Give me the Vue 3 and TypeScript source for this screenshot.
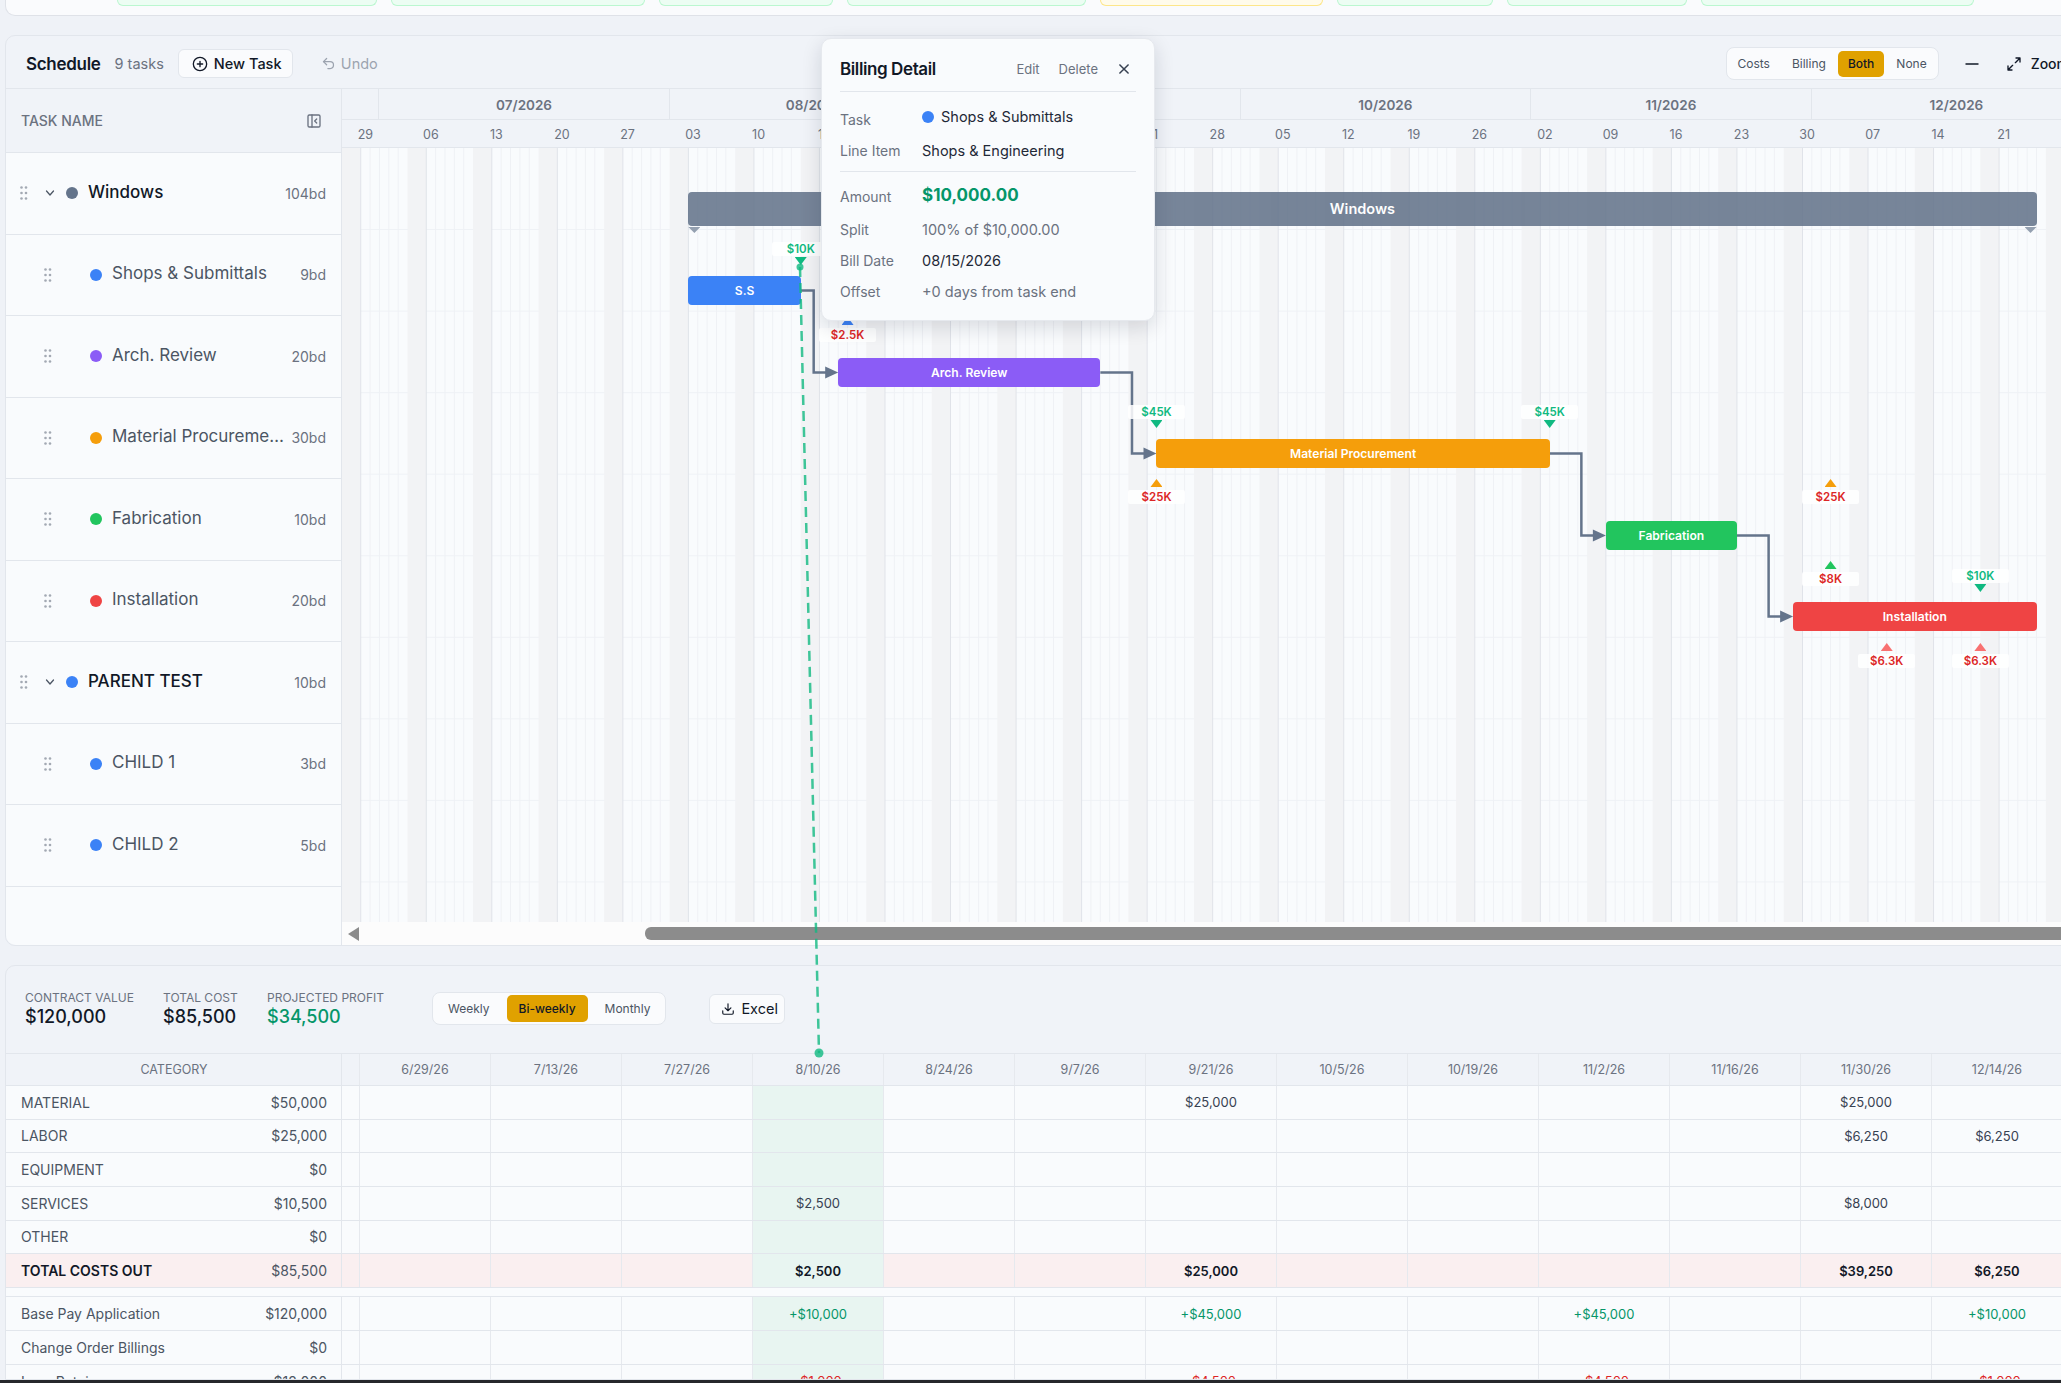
<script setup lang="ts">
const DAY = 9.362;
const ROW = 81.55;

const pills = [
  { w: 260, warn: false },
  { w: 254, warn: false },
  { w: 174, warn: false },
  { w: 239, warn: false },
  { w: 223, warn: true },
  { w: 156, warn: false },
  { w: 180, warn: false },
  { w: 273, warn: false },
];

const tasks = [
  { name: "Windows", dur: "104bd", color: "#64748b", parent: true },
  { name: "Shops & Submittals", dur: "9bd", color: "#3b82f6", parent: false },
  { name: "Arch. Review", dur: "20bd", color: "#8b5cf6", parent: false },
  { name: "Material Procurement", dur: "30bd", color: "#f59e0b", parent: false },
  { name: "Fabrication", dur: "10bd", color: "#22c55e", parent: false },
  { name: "Installation", dur: "20bd", color: "#ef4444", parent: false },
  { name: "PARENT TEST", dur: "10bd", color: "#3b82f6", parent: true },
  { name: "CHILD 1", dur: "3bd", color: "#3b82f6", parent: false },
  { name: "CHILD 2", dur: "5bd", color: "#3b82f6", parent: false },
];

const months = [
  { label: "", days: 4 },
  { label: "07/2026", days: 31 },
  { label: "08/2026", days: 31 },
  { label: "09/2026", days: 30 },
  { label: "10/2026", days: 31 },
  { label: "11/2026", days: 30 },
  { label: "12/2026", days: 31 },
];

const weeks = ["29", "06", "13", "20", "27", "03", "10", "17", "24", "31", "07", "14", "21", "28", "05", "12", "19", "26", "02", "09", "16", "23", "30", "07", "14", "21"];

// grid lines, day 0 is Sat Jun 27
const totalDays = 186;
const dayIdx = Array.from({ length: totalDays }, (_, i) => i);
const rowIdx = Array.from({ length: 9 }, (_, i) => i + 1);
const weekendDays = dayIdx.filter((d) => d % 7 === 0);
const weekdayLines = dayIdx.filter((d) => d % 7 > 2);
const mondayLines = dayIdx.filter((d) => d % 7 === 2);

const bars = [
  { label: "S.S", start: 37, end: 49, top: 128, color: "#3b82f6" },
  { label: "Arch. Review", start: 53, end: 81, top: 210, color: "#8b5cf6" },
  { label: "Material Procurement", start: 87, end: 129, top: 291, color: "#f59e0b" },
  { label: "Fabrication", start: 135, end: 149, top: 373, color: "#22c55e" },
  { label: "Installation", start: 155, end: 181, top: 454, color: "#ef4444" },
];

const links = bars.slice(1).map((b, i) => {
  const from = bars[i];
  const tx = b.start * DAY;
  const y1 = from.top + 14.5;
  const y2 = b.top + 14.5;
  return {
    line: `M${from.end * DAY} ${y1}H${tx - 24.5}V${y2}H${tx - 10}`,
    arrow: `${tx},${y2} ${tx - 13},${y2 - 6} ${tx - 13},${y2 + 6}`,
  };
});

const GREEN = "#10b981";
const RED = "#dc2626";
const markers = [
  { day: 49, top: 94, down: true, label: "$10K", tri: GREEN, text: GREEN },
  { day: 54, top: 169, down: false, label: "$2.5K", tri: "#3b82f6", text: RED },
  { day: 87, top: 257, down: true, label: "$45K", tri: GREEN, text: GREEN },
  { day: 129, top: 257, down: true, label: "$45K", tri: GREEN, text: GREEN },
  { day: 87, top: 331, down: false, label: "$25K", tri: "#f59e0b", text: RED },
  { day: 159, top: 331, down: false, label: "$25K", tri: "#f59e0b", text: RED },
  { day: 159, top: 413, down: false, label: "$8K", tri: "#22c55e", text: RED },
  { day: 175, top: 421, down: true, label: "$10K", tri: GREEN, text: GREEN },
  { day: 165, top: 495, down: false, label: "$6.3K", tri: "#f87171", text: RED },
  { day: 175, top: 495, down: false, label: "$6.3K", tri: "#f87171", text: RED },
];

const periods = ["6/29/26", "7/13/26", "7/27/26", "8/10/26", "8/24/26", "9/7/26", "9/21/26", "10/5/26", "10/19/26", "11/2/26", "11/16/26", "11/30/26", "12/14/26"];

type Row = { label: string; total: string; cells: Record<number, string>; kind?: string };

const costRows: Row[] = [
  { label: "MATERIAL", total: "$50,000", cells: { 6: "$25,000", 11: "$25,000" } },
  { label: "LABOR", total: "$25,000", cells: { 11: "$6,250", 12: "$6,250" } },
  { label: "EQUIPMENT", total: "$0", cells: {} },
  { label: "SERVICES", total: "$10,500", cells: { 3: "$2,500", 11: "$8,000" } },
  { label: "OTHER", total: "$0", cells: {} },
  { label: "TOTAL COSTS OUT", total: "$85,500", cells: { 3: "$2,500", 6: "$25,000", 11: "$39,250", 12: "$6,250" }, kind: "total" },
];

const billRows: Row[] = [
  { label: "Base Pay Application", total: "$120,000", cells: { 3: "+$10,000", 6: "+$45,000", 9: "+$45,000", 12: "+$10,000" }, kind: "plus" },
  { label: "Change Order Billings", total: "$0", cells: {}, kind: "plus" },
  { label: "Less Retainage", total: "$12,000", cells: { 3: "-$1,000", 6: "-$4,500", 9: "-$4,500", 12: "-$1,000" }, kind: "neg" },
];
</script>

<template>
  <div class="page">
    <section class="top-card">
      <span v-for="(p, i) in pills" :key="i" class="pill" :class="{ warn: p.warn }" :style="{ width: p.w + 'px' }"></span>
    </section>

    <section class="schedule">
      <header class="toolbar">
        <strong class="title">Schedule</strong>
        <span class="count">9 tasks</span>
        <button class="btn new-task">
          <svg width="16" height="16" viewBox="0 0 24 24" fill="none" stroke="currentColor" stroke-width="2" stroke-linecap="round"><circle cx="12" cy="12" r="10" /><path d="M12 8v8M8 12h8" /></svg>
          New Task
        </button>
        <span class="undo">
          <svg width="15" height="15" viewBox="0 0 24 24" fill="none" stroke="currentColor" stroke-width="2" stroke-linecap="round" stroke-linejoin="round"><path d="M9 14 4 9l5-5" /><path d="M4 9h10.5a5.5 5.5 0 0 1 0 11H11" /></svg>
          Undo
        </span>
        <div class="toolbar-right">
          <div class="segment">
            <span class="seg-item">Costs</span>
            <span class="seg-item">Billing</span>
            <span class="seg-item active">Both</span>
            <span class="seg-item">None</span>
          </div>
          <svg class="minus-icon" width="14" height="14" viewBox="0 0 14 14" fill="none" stroke="#111827" stroke-width="1.5"><path d="M0.5 7h13" /></svg>
          <span class="zoom-btn">
            <svg width="16" height="16" viewBox="0 0 24 24" fill="none" stroke="#111827" stroke-width="2" stroke-linecap="round" stroke-linejoin="round"><path d="M15 3h6v6M9 21H3v-6M21 3l-7 7M3 21l7-7" /></svg>
            Zoom
          </span>
        </div>
      </header>

      <div class="gantt">
        <aside class="task-pane">
          <div class="task-head">
            <span>TASK NAME</span>
            <svg width="16" height="16" viewBox="0 0 24 24" fill="none" stroke="#6b7280" stroke-width="2" stroke-linecap="round" stroke-linejoin="round"><rect x="3" y="3" width="18" height="18" rx="2" /><path d="M9 3v18M16 15l-3-3 3-3" /></svg>
          </div>
          <div v-for="t in tasks" :key="t.name" class="task-row" :class="{ parent: t.parent }">
            <svg class="grip" width="8" height="14" viewBox="0 0 8 14" fill="#a3a9b3">
              <circle cx="1.5" cy="1.5" r="1.3" /><circle cx="6" cy="1.5" r="1.3" />
              <circle cx="1.5" cy="7" r="1.3" /><circle cx="6" cy="7" r="1.3" />
              <circle cx="1.5" cy="12.5" r="1.3" /><circle cx="6" cy="12.5" r="1.3" />
            </svg>
            <svg v-if="t.parent" class="chev" width="12" height="12" viewBox="0 0 24 24" fill="none" stroke="#4b5563" stroke-width="2.5" stroke-linecap="round" stroke-linejoin="round"><path d="m5 8 7 8 7-8" /></svg>
            <i class="dot" :style="{ background: t.color }"></i>
            <span class="task-name">{{ t.name }}</span>
            <span class="task-dur">{{ t.dur }}</span>
          </div>
        </aside>

        <div class="timeline">
          <div class="month-row">
            <div v-for="m in months" :key="m.label" class="month" :style="{ width: m.days * DAY + 'px' }">{{ m.label }}</div>
          </div>
          <div class="week-row">
            <div v-for="(w, i) in weeks" :key="i" class="week" :style="{ width: DAY * 7 + 'px' }"><span>{{ w }}</span></div>
          </div>
          <div class="canvas">
            <svg class="grid" :width="totalDays * DAY" height="774">
              <path v-for="r in rowIdx" :key="'r' + r" :d="`M0 ${r * ROW}H${totalDays * DAY}`" stroke="#eff2f6" />
              <path v-for="d in weekdayLines" :key="'d' + d" :d="`M${d * DAY} 0V774`" stroke="#eff1f5" />
              <rect v-for="d in weekendDays" :key="'w' + d" :x="d * DAY" y="0" :width="DAY * 2" height="774" fill="#f2f3f5" />
              <path v-for="d in mondayLines" :key="'m' + d" :d="`M${d * DAY} 0V774`" stroke="#e0e3e9" />
            </svg>

            <div class="summary-bar" :style="{ left: 37 * DAY + 'px', width: 144 * DAY + 'px' }">Windows</div>
            <i class="caret" :style="{ left: 37 * DAY + 'px' }"></i>
            <i class="caret" :style="{ left: 181 * DAY - 12 + 'px' }"></i>

            <svg class="links" :width="totalDays * DAY" height="774">
              <g v-for="(l, i) in links" :key="i">
                <path :d="l.line" fill="none" stroke="#64748b" stroke-width="2.5" />
                <polygon :points="l.arrow" fill="#64748b" />
              </g>
            </svg>

            <div
              v-for="b in bars"
              :key="b.label"
              class="bar"
              :style="{ left: b.start * DAY + 'px', width: (b.end - b.start) * DAY + 'px', top: b.top + 'px', background: b.color }"
            >{{ b.label }}</div>

            <div
              v-for="(m, i) in markers"
              :key="i"
              class="marker"
              :class="{ down: m.down }"
              :style="{ left: m.day * DAY + 'px', top: m.top + 'px' }"
            >
              <span class="m-label" :style="{ color: m.text }">{{ m.label }}</span>
              <i class="m-tri" :style="{ background: m.tri }"></i>
            </div>
          </div>
          <div class="scroll-strip">
            <i class="scroll-arrow"></i>
            <i class="scroll-thumb"></i>
          </div>
        </div>
      </div>
    </section>

    <section class="cashflow">
      <div class="cash-head">
        <div class="stat stat-contract"><label>CONTRACT VALUE</label><b>$120,000</b></div>
        <div class="stat stat-cost"><label>TOTAL COST</label><b>$85,500</b></div>
        <div class="stat stat-profit"><label>PROJECTED PROFIT</label><b class="profit">$34,500</b></div>
        <div class="segment period">
          <span class="seg-item">Weekly</span>
          <span class="seg-item active">Bi-weekly</span>
          <span class="seg-item">Monthly</span>
        </div>
        <button class="btn excel">
          <svg width="14" height="14" viewBox="0 0 24 24" fill="none" stroke="currentColor" stroke-width="2" stroke-linecap="round" stroke-linejoin="round"><path d="M21 15v4a2 2 0 0 1-2 2H5a2 2 0 0 1-2-2v-4M7 10l5 5 5-5M12 15V3" /></svg>
          Excel
        </button>
      </div>

      <div class="table">
        <div class="t-row t-head">
          <div class="t-label center">CATEGORY</div>
          <div class="t-gap"></div>
          <div v-for="p in periods" :key="p" class="t-cell">{{ p }}</div>
        </div>
        <div v-for="r in costRows" :key="r.label" class="t-row" :class="r.kind">
          <div class="t-label"><span>{{ r.label }}</span><span class="t-amt">{{ r.total }}</span></div>
          <div class="t-gap"></div>
          <div v-for="(p, i) in periods" :key="p" class="t-cell" :class="{ hl: i === 3 }">{{ r.cells[i] }}</div>
        </div>
        <div class="t-spacer"></div>
        <div v-for="r in billRows" :key="r.label" class="t-row" :class="r.kind">
          <div class="t-label"><span>{{ r.label }}</span><span class="t-amt">{{ r.total }}</span></div>
          <div class="t-gap"></div>
          <div v-for="(p, i) in periods" :key="p" class="t-cell" :class="{ hl: i === 3 }">{{ r.cells[i] }}</div>
        </div>
      </div>
    </section>

    <footer class="bottom-strip"></footer>

    <!-- drag guide from the milestone to its cash flow column -->
    <svg class="guide" width="2061" height="1383">
      <path d="M800 267L819 1053" stroke="#10b981" stroke-opacity="0.8" stroke-width="2.5" stroke-dasharray="10 6" />
      <circle cx="800" cy="267" r="3.5" fill="#10b981" fill-opacity="0.8" />
      <circle cx="819" cy="1053" r="4.5" fill="#10b981" fill-opacity="0.8" />
    </svg>

    <div class="popup">
      <div class="pop-head">
        <h3>Billing Detail</h3>
        <span class="pop-link">Edit</span>
        <span class="pop-link">Delete</span>
        <svg width="14" height="14" viewBox="0 0 24 24" fill="none" stroke="#374151" stroke-width="2.6" stroke-linecap="round"><path d="M5 5l14 14M19 5 5 19" /></svg>
      </div>
      <div class="pop-row"><span class="k">Task</span><span class="v v-task"><i class="dot" style="background: #3b82f6"></i>Shops &amp; Submittals</span></div>
      <div class="pop-row"><span class="k">Line Item</span><span class="v">Shops &amp; Engineering</span></div>
      <hr />
      <div class="pop-row amount"><span class="k">Amount</span><span class="v money">$10,000.00</span></div>
      <div class="pop-row"><span class="k">Split</span><span class="v muted">100% of $10,000.00</span></div>
      <div class="pop-row"><span class="k">Bill Date</span><span class="v">08/15/2026</span></div>
      <div class="pop-row"><span class="k">Offset</span><span class="v muted">+0 days from task end</span></div>
    </div>
  </div>
</template>

<style scoped>
.page {
  position: relative;
  width: 2061px;
  height: 1383px;
  overflow: hidden;
  display: flex;
  flex-direction: column;
  background: #eff2f7;
  font-family: Inter, "Liberation Sans", sans-serif;
  color: #111827;
}

.top-card {
  flex: none;
  box-sizing: border-box;
  width: 2100px;
  height: 16px;
  margin-left: 5px;
  padding-left: 111px;
  display: flex;
  gap: 14px;
  align-items: flex-start;
  background: #fafbfd;
  border: 1px solid #dfe2e8;
  border-top: 0;
  border-radius: 0 0 10px 10px;
}
.pill {
  height: 6px;
  box-sizing: border-box;
  background: #ecfdf3;
  border: 1px solid #bbf7d0;
  border-top: 0;
  border-radius: 0 0 10px 10px;
}
.pill.warn {
  background: #fffbeb;
  border-color: #fde68a;
}

.schedule {
  flex: none;
  box-sizing: border-box;
  width: 2100px;
  height: 911px;
  margin: 19px 0 0 5px;
  background: #f0f3f8;
  border: 1px solid #e2e6ec;
  border-radius: 10px;
  display: flex;
  flex-direction: column;
}

.toolbar {
  flex: none;
  box-sizing: border-box;
  height: 53px;
  display: flex;
  align-items: center;
  padding: 3px 35px 0 20px;
  border-bottom: 1px solid #e2e6ec;
  white-space: nowrap;
}
.title {
  font-size: 17px;
  font-weight: 600;
  letter-spacing: -0.3px;
}
.count {
  margin-left: 14px;
  font-size: 14.5px;
  color: #6b7280;
}
.btn {
  display: inline-flex;
  align-items: center;
  box-sizing: border-box;
  background: #fafbfd;
  border: 1px solid #e2e6ec;
  border-radius: 6px;
  font-family: inherit;
  color: #111827;
  font-size: 14.5px;
  font-weight: 500;
  white-space: nowrap;
}
.new-task {
  height: 29px;
  width: 115px;
  margin-left: 14px;
  padding: 0 0 0 13px;
  gap: 6px;
}
.undo {
  display: inline-flex;
  align-items: center;
  gap: 5px;
  margin-left: 28px;
  font-size: 14.5px;
  color: #9ca3af;
}
.toolbar-right {
  margin-left: auto;
  display: flex;
  align-items: center;
}
.segment {
  display: flex;
  align-items: center;
  gap: 2px;
  box-sizing: border-box;
  height: 33px;
  padding: 0 1px;
  background: #fafbfd;
  border: 1px solid #e2e6ec;
  border-radius: 8px;
}
.seg-item {
  padding: 0 10px;
  height: 26px;
  line-height: 26px;
  font-size: 12px;
  color: #4b5563;
  border-radius: 5px;
}
.seg-item.active {
  background: #e0a100;
  color: #111827;
  font-weight: 500;
}
.minus-icon {
  margin-left: 26px;
}
.zoom-btn {
  display: inline-flex;
  align-items: center;
  gap: 9px;
  margin-left: 27px;
  font-size: 14px;
  font-weight: 500;
}

.gantt {
  flex: 1;
  display: flex;
  min-height: 0;
}
.task-pane {
  flex: none;
  box-sizing: border-box;
  width: 336px;
  background: #f9fbfd;
  border-right: 1px solid #e2e6ec;
  border-radius: 0 0 0 10px;
}
.task-head {
  box-sizing: border-box;
  height: 64px;
  display: flex;
  align-items: center;
  justify-content: space-between;
  padding: 0 19px 0 15px;
  background: #f0f3f8;
  border-bottom: 1px solid #e2e6ec;
  font-size: 14px;
  font-weight: 500;
  color: #6b7280;
}
.task-row {
  box-sizing: border-box;
  height: 81.5px;
  display: flex;
  align-items: center;
  padding: 0 15px 0 38px;
  border-bottom: 1px solid #e2e6ec;
}
.task-row.parent {
  padding-left: 14px;
}
.grip {
  flex: none;
}
.chev {
  flex: none;
  margin-left: 16px;
}
.dot {
  flex: none;
  display: inline-block;
  width: 12px;
  height: 12px;
  border-radius: 50%;
}
.task-row .dot {
  margin-left: 38px;
}
.task-row.parent .dot {
  margin-left: 10px;
}
.task-name {
  flex: 1;
  min-width: 0;
  margin: -3px 7px 0 10px;
  overflow: hidden;
  white-space: nowrap;
  text-overflow: ellipsis;
  font-size: 17px;
  color: #4b5563;
}
.task-row.parent .task-name {
  font-weight: 500;
  color: #111827;
}
.task-dur {
  flex: none;
  font-size: 14px;
  color: #6b7280;
}

.timeline {
  flex: 1;
  min-width: 0;
  display: flex;
  flex-direction: column;
}
.month-row {
  flex: none;
  box-sizing: border-box;
  height: 31px;
  display: flex;
  border-bottom: 1px solid #e2e6ec;
}
.month {
  flex: none;
  box-sizing: border-box;
  border-right: 1px solid #e2e6ec;
  text-align: center;
  line-height: 33px;
  font-size: 13.5px;
  font-weight: 600;
  color: #6b7280;
}
.week-row {
  flex: none;
  box-sizing: border-box;
  height: 28px;
  padding-left: 18.7px;
  display: flex;
  border-bottom: 1px solid #e2e6ec;
}
.week {
  flex: none;
  font-size: 12.5px;
  line-height: 29px;
  color: #6b7280;
}
.week span {
  display: inline-flex;
  justify-content: center;
  width: 9.362px;
}
.canvas {
  position: relative;
  flex: 1;
  min-height: 0;
  background: #f9fbfd;
  overflow: hidden;
}
.grid,
.links {
  position: absolute;
  left: 0;
  top: 0;
}
.summary-bar {
  position: absolute;
  top: 44px;
  height: 34px;
  box-sizing: border-box;
  border-radius: 4px;
  background: #64748b;
  opacity: 0.88;
  color: #fff;
  font-size: 14.5px;
  font-weight: 600;
  line-height: 34px;
  text-align: center;
}
.caret {
  position: absolute;
  top: 79px;
  width: 12px;
  height: 6px;
  background: #94a0b0;
  clip-path: polygon(0 0, 100% 0, 50% 100%);
}
.bar {
  position: absolute;
  height: 29px;
  border-radius: 4px;
  color: #fff;
  font-size: 12.1px;
  font-weight: 600;
  line-height: 29px;
  text-align: center;
  white-space: nowrap;
}
.marker {
  position: absolute;
  width: 57px;
  margin-left: -28.5px;
  display: flex;
  flex-direction: column-reverse;
  align-items: center;
  gap: 3px;
}
.marker.down {
  flex-direction: column;
  gap: 1px;
}
.m-label {
  width: 100%;
  height: 14px;
  line-height: 14px;
  text-align: center;
  font-size: 11.5px;
  font-weight: 600;
  background: rgba(255, 255, 255, 0.85);
  border-radius: 2px;
}
.m-tri {
  width: 12px;
  height: 8px;
  clip-path: polygon(50% 0, 100% 100%, 0 100%);
}
.marker.down .m-tri {
  clip-path: polygon(0 0, 100% 0, 50% 100%);
}
.scroll-strip {
  flex: none;
  height: 23px;
  position: relative;
  background: #fcfcfc;
}
.scroll-arrow {
  position: absolute;
  left: 6px;
  top: 5px;
  width: 11px;
  height: 14px;
  background: #8c8c8c;
  clip-path: polygon(100% 0, 100% 100%, 0 50%);
}
.scroll-thumb {
  position: absolute;
  left: 303px;
  right: 0;
  top: 5px;
  height: 13px;
  background: #8c8c8c;
  border-radius: 6px;
}

.cashflow {
  flex: 1;
  min-height: 0;
  width: 2100px;
  box-sizing: border-box;
  margin: 19px 0 0 5px;
  background: #f0f3f8;
  border: 1px solid #e2e6ec;
  border-radius: 10px 10px 0 0;
  overflow: hidden;
}
.cash-head {
  box-sizing: border-box;
  height: 87px;
  display: flex;
  align-items: center;
  padding: 0 0 0 19px;
}
.stat {
  display: flex;
  flex-direction: column;
  gap: 1px;
  margin-top: -2px;
}
.stat label {
  font-size: 12px;
  color: #6b7280;
}
.stat b {
  font-size: 18px;
  font-weight: 500;
}
.stat b.profit {
  color: #059669;
}
.stat-contract {
  width: 138px;
}
.stat-cost {
  width: 104px;
}
.stat-profit {
  width: 165px;
}
.period {
  gap: 5px;
  padding: 0 3px;
  margin-top: -2px;
}
.period .seg-item {
  padding: 0 12px;
  height: 27px;
  line-height: 27px;
}
.excel {
  height: 30px;
  width: 76px;
  margin: -2px 0 0 43px;
  padding-left: 11px;
  gap: 6px;
  font-weight: 400;
}

.table {
  font-size: 13px;
}
.t-row {
  display: grid;
  grid-template-columns: 336px 18px repeat(13, 131px);
  box-sizing: border-box;
  height: 33.67px;
  background: #f9fbfd;
  border-bottom: 1px solid #e2e6ec;
}
.t-head {
  height: 33px;
  background: #f0f3f8;
  border-top: 1px solid #e2e6ec;
  color: #6b7280;
  font-size: 12.5px;
}
.t-label {
  box-sizing: border-box;
  display: flex;
  align-items: center;
  justify-content: space-between;
  padding: 0 14px 0 15px;
  border-right: 1px solid #e2e6ec;
  font-size: 14px;
  color: #4b5563;
}
.t-head .t-label {
  justify-content: center;
  font-size: 12.5px;
  color: #6b7280;
}
.t-gap,
.t-cell {
  box-sizing: border-box;
  border-right: 1px solid #e6e9ee;
}
.t-cell {
  display: flex;
  align-items: center;
  justify-content: center;
  color: #374151;
}
.t-head .t-cell {
  color: #6b7280;
}
.t-cell.hl {
  background: #e8f5f1;
}
.t-row.total {
  background: #faeff0;
}
.t-row.total .t-label span:first-child {
  font-weight: 600;
  color: #111827;
}
.t-row.total .t-cell {
  font-weight: 600;
  color: #111827;
}
.t-row.plus .t-cell {
  color: #059669;
}
.t-row.neg .t-cell {
  color: #dc2626;
}
.t-spacer {
  box-sizing: border-box;
  height: 9.5px;
  background: #f9fbfd;
  border-bottom: 1px solid #e2e6ec;
}

.bottom-strip {
  flex: none;
  height: 3px;
  background: #26282b;
}

.guide {
  position: absolute;
  left: 0;
  top: 0;
  pointer-events: none;
}

.popup {
  position: absolute;
  left: 821px;
  top: 38px;
  box-sizing: border-box;
  width: 334px;
  height: 283px;
  padding: 0 18px;
  background: #f9fbfd;
  border: 1px solid #e6e9ee;
  border-radius: 10px;
  box-shadow: 0 6px 20px rgba(15, 23, 42, 0.14);
}
.pop-head {
  height: 53px;
  padding-top: 7px;
  display: flex;
  align-items: center;
  border-bottom: 1px solid #e2e6ec;
  box-sizing: border-box;
  margin-bottom: 12px;
}
.pop-head h3 {
  flex: 1;
  margin: 0;
  font-size: 17px;
  font-weight: 600;
  letter-spacing: -0.4px;
}
.pop-link {
  margin-right: 19px;
  font-size: 13px;
  color: #6b7280;
}
.pop-head svg {
  margin-right: 5px;
}
.pop-row {
  height: 31px;
  display: flex;
  align-items: center;
  font-size: 14px;
}
.k {
  flex: none;
  width: 82px;
  color: #6b7280;
}
.v {
  color: #1f2937;
  font-size: 14.5px;
}
.v-task {
  display: inline-flex;
  align-items: center;
  gap: 7px;
  margin-top: -6px;
}
.money {
  font-size: 17px;
  font-weight: 700;
  color: #059669;
  margin-top: -3px;
}
.muted {
  color: #6b7280;
}
.amount {
  height: 35px;
}
hr {
  margin: 5px 0 7px;
  border: 0;
  border-top: 1px solid #e2e6ec;
}
</style>

<style>
html,
body {
  margin: 0;
  overflow: hidden;
}
</style>
